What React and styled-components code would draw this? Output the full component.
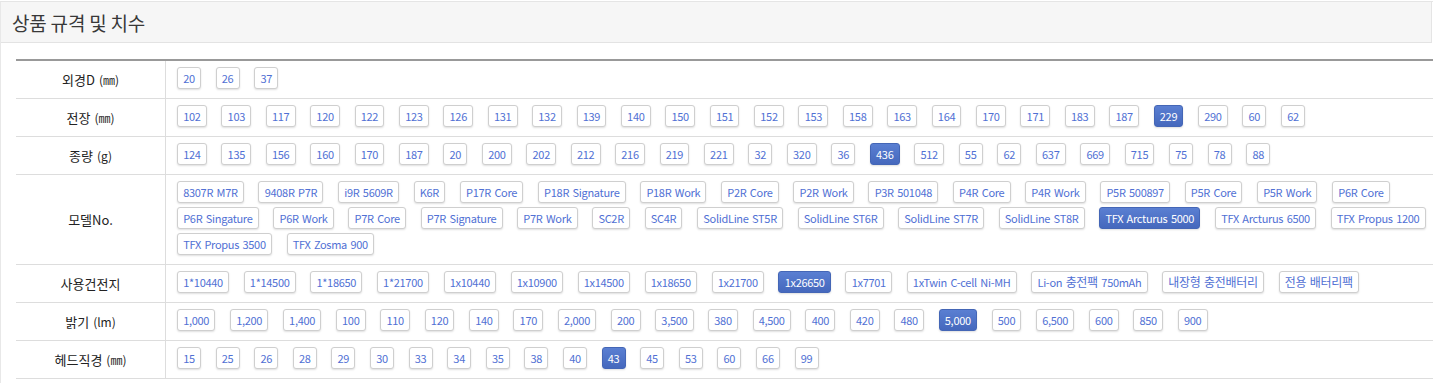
import React from 'react';
import styled, { createGlobalStyle } from 'styled-components';

const GlobalStyle = createGlobalStyle`
  html, body {
    margin: 0;
    padding: 0;
    background: #fff;
  }
  body {
    font-family: "Noto Sans CJK KR", "Noto Sans", sans-serif;
    color: #333;
  }
`;

const Panel = styled.section`
  border-top: 1px solid #e5e5e5;
  border-left: 1px solid #e8e8e8;
  margin-top: 1px;
  height: 382px;
  box-sizing: border-box;
`;

const PanelHeader = styled.header`
  height: 41px;
  box-sizing: border-box;
  display: flex;
  align-items: center;
  padding-left: 11px;
  background: #f6f6f6;
  border-bottom: 1px solid #e3e3e3;
  border-right: 1px solid #e5e5e5;
  margin-right: 1px;
  font-size: 19px;
  color: #383838;
  letter-spacing: -0.2px;
`;

const PanelBody = styled.div`
  padding: 16px 0 0 15px;
`;

const SpecTable = styled.div`
  border-top: 2px solid #999;
`;

const Row = styled.div`
  display: grid;
  grid-template-columns: 150px 1fr;
  border-bottom: 1px solid #ddd;
`;

const Label = styled.div`
  display: flex;
  align-items: center;
  justify-content: center;
  border-right: 1px solid #ddd;
  font-size: 13px;
  color: #222;
`;

const Unit = styled.span`
  font-size: 12px;
  margin-left: 4px;
`;

const Values = styled.div`
  display: flex;
  flex-wrap: wrap;
  column-gap: 14.6px;
  row-gap: 4px;
  padding: 6px 2px 9px 11px;
`;

const Chip = styled.span`
  display: inline-block;
  height: 22px;
  box-sizing: border-box;
  padding: 0 5.2px;
  font-size: 11px;
  letter-spacing: -0.3px;
  word-spacing: 1.3px;
  line-height: 20px;
  border: 1px solid ${p => (p.$active ? '#4466b6' : '#cfcfcf')};
  border-radius: 3px;
  background: ${p => (p.$active ? 'linear-gradient(#5a7fd2, #4568bd)' : '#fff')};
  color: ${p => (p.$active ? '#fff' : '#5070d4')};
  box-shadow: 0 1px 2px rgba(0, 0, 0, 0.13);
  white-space: nowrap;
`;

const Ko = styled.span`
  font-size: 12px;
`;

const rows = [
  { label: '외경D', unit: '(㎜)', items: ['20', '26', '37'] },
  {
    label: '전장',
    unit: '(㎜)',
    active: '229',
    items: ['102', '103', '117', '120', '122', '123', '126', '131', '132', '139', '140', '150', '151', '152', '153', '158', '163', '164', '170', '171', '183', '187', '229', '290', '60', '62'],
  },
  {
    label: '종량',
    unit: '(g)',
    active: '436',
    items: ['124', '135', '156', '160', '170', '187', '20', '200', '202', '212', '216', '219', '221', '32', '320', '36', '436', '512', '55', '62', '637', '669', '715', '75', '78', '88'],
  },
  {
    label: '모델No.',
    active: 'TFX Arcturus 5000',
    items: ['8307R M7R', '9408R P7R', 'i9R 5609R', 'K6R', 'P17R Core', 'P18R Signature', 'P18R Work', 'P2R Core', 'P2R Work', 'P3R 501048', 'P4R Core', 'P4R Work', 'P5R 500897', 'P5R Core', 'P5R Work', 'P6R Core', 'P6R Singature', 'P6R Work', 'P7R Core', 'P7R Signature', 'P7R Work', 'SC2R', 'SC4R', 'SolidLine ST5R', 'SolidLine ST6R', 'SolidLine ST7R', 'SolidLine ST8R', 'TFX Arcturus 5000', 'TFX Arcturus 6500', 'TFX Propus 1200', 'TFX Propus 3500', 'TFX Zosma 900'],
  },
  {
    label: '사용건전지',
    active: '1x26650',
    items: ['1*10440', '1*14500', '1*18650', '1*21700', '1x10440', '1x10900', '1x14500', '1x18650', '1x21700', '1x26650', '1x7701', '1xTwin C-cell Ni-MH', 'Li-on 충전팩 750mAh', '내장형 충전배터리', '전용 배터리팩'],
  },
  {
    label: '밝기',
    unit: '(lm)',
    active: '5,000',
    items: ['1,000', '1,200', '1,400', '100', '110', '120', '140', '170', '2,000', '200', '3,500', '380', '4,500', '400', '420', '480', '5,000', '500', '6,500', '600', '850', '900'],
  },
  {
    label: '헤드직경',
    unit: '(㎜)',
    active: '43',
    items: ['15', '25', '26', '28', '29', '30', '33', '34', '35', '38', '40', '43', '45', '53', '60', '66', '99'],
  },
];

// hangul runs get a slightly larger size, like the original web font
const chipText = text =>
  text.split(/([\uAC00-\uD7A3]+)/).map((part, i) =>
    /[\uAC00-\uD7A3]/.test(part) ? <Ko key={i}>{part}</Ko> : part
  );

export default function App() {
  return (
    <>
      <GlobalStyle />
      <Panel>
        <PanelHeader>상품 규격 및 치수</PanelHeader>
        <PanelBody>
          <SpecTable>
            {rows.map(row => (
              <Row key={row.label}>
                <Label>
                  {row.label}
                  {row.unit && <Unit>{row.unit}</Unit>}
                </Label>
                <Values>
                  {row.items.map(item => (
                    <Chip key={item} $active={item === row.active}>
                      {chipText(item)}
                    </Chip>
                  ))}
                </Values>
              </Row>
            ))}
          </SpecTable>
        </PanelBody>
      </Panel>
    </>
  );
}
